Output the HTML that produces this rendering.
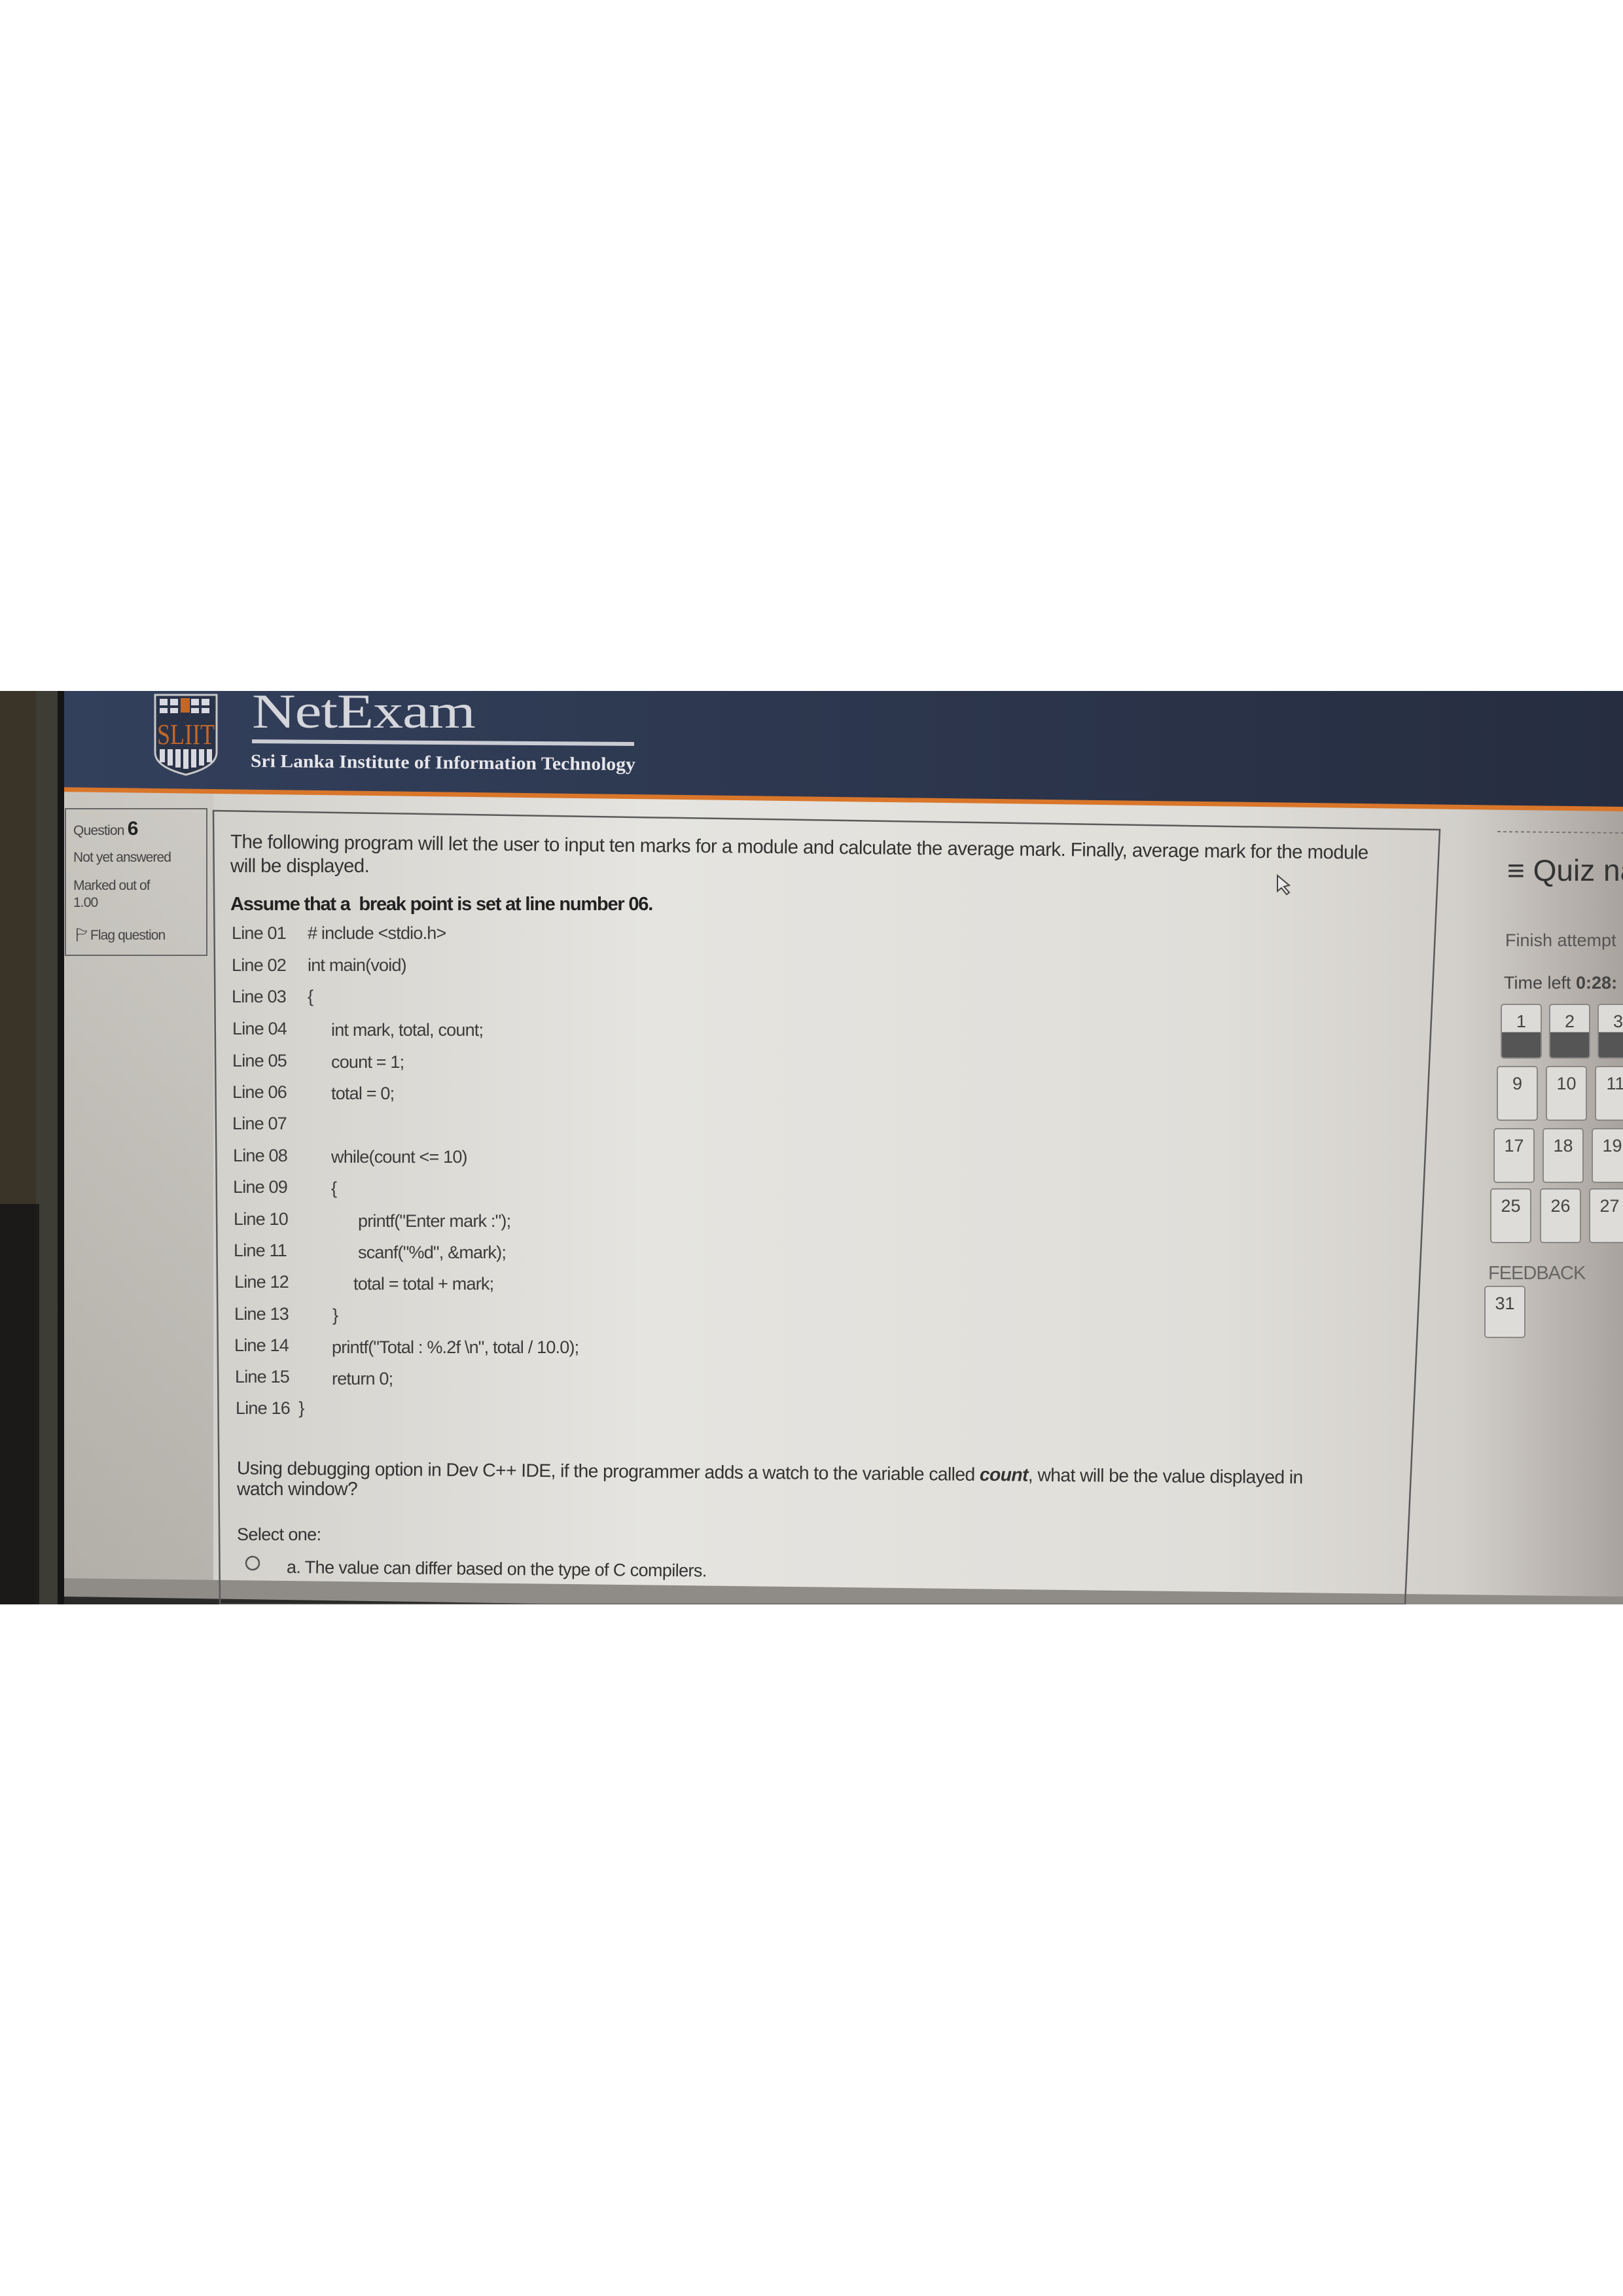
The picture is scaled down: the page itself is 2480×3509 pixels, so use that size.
<!DOCTYPE html>
<html><head><meta charset="utf-8"><style>
*{margin:0;padding:0;box-sizing:border-box}
body{width:2480px;height:3509px;background:#fff;position:relative;overflow:hidden;font-family:"Liberation Sans",sans-serif;color:#3a3a3a}
.a{position:absolute;white-space:nowrap}
.t{font-size:27px;letter-spacing:-0.6px;color:#333}
.ln{font-size:27px;letter-spacing:-0.8px;color:#3c3c3c}
.btn{position:absolute;width:63px;height:84px;border:2px solid #8a8884;border-radius:5px;background:#dddcd8;font-size:27px;text-align:center;padding-top:10px;color:#444}
.btn.f{background:linear-gradient(#dcdbd7 0 52%,#555 52%)}
</style></head><body>
<svg class="a" style="left:0;top:1056px" width="2480" height="1396" viewBox="0 1056 2480 1396">
<defs>
<linearGradient id="hd" x1="0" x2="1"><stop offset="0" stop-color="#33405c"/><stop offset="1" stop-color="#262d40"/></linearGradient>
<linearGradient id="bg" x1="0" x2="1"><stop offset="0" stop-color="#c4c1bb"/><stop offset="0.13" stop-color="#d3d1cc"/><stop offset="0.4" stop-color="#e5e4e0"/><stop offset="0.75" stop-color="#e0ded9"/><stop offset="0.9" stop-color="#d2cfca"/><stop offset="1" stop-color="#a9a39e"/></linearGradient>
<linearGradient id="lb" x1="0" y1="0" x2="0" y2="1"><stop offset="0" stop-color="#c9c6c0"/><stop offset="1" stop-color="#a29e97"/></linearGradient>
</defs>
<rect x="0" y="1056" width="2480" height="1396" fill="url(#bg)"/>
<rect x="90" y="1210" width="236" height="1242" fill="url(#lb)" opacity="0.6"/>
<polygon points="85,1056 2480,1056 2480,1236 85,1205" fill="url(#hd)"/>
<polygon points="85,1203 2480,1233 2480,1240 85,1210" fill="#d9762a"/>
<rect x="0" y="1056" width="55" height="1396" fill="#3a3428"/>
<rect x="55" y="1056" width="35" height="1396" fill="#3d3c35"/>
<rect x="88" y="1056" width="10" height="1396" fill="#151515"/>
<rect x="0" y="1840" width="60" height="612" fill="#141414" opacity="0.8"/>
<polygon points="98,2412 2480,2440 2480,2452 98,2452" fill="#8f8c88"/>
<polygon points="98,2440 900,2452 98,2452" fill="#2a2a28"/>
<rect x="100" y="1236" width="216" height="224" fill="none" stroke="#666" stroke-width="2"/>
<polygon points="326,1239 2200,1268 2147,2452 336,2452" fill="none" stroke="#5a5a5a" stroke-width="2.5"/>
<line x1="2288" y1="1271" x2="2480" y2="1273" stroke="#777" stroke-width="2" stroke-dasharray="5,4"/>
<line x1="385" y1="1133" x2="969" y2="1137" stroke="#c9ccd3" stroke-width="6"/>
<path d="M237,1062 H331 V1150 Q331,1172 284,1184 Q237,1172 237,1150 Z" fill="#2a3248" stroke="#c8c8c8" stroke-width="3"/>
<g fill="#d8d8e0"><rect x="244" y="1068" width="12" height="10"/><rect x="260" y="1068" width="12" height="10"/><rect x="292" y="1068" width="12" height="10"/><rect x="308" y="1068" width="12" height="10"/><rect x="244" y="1082" width="12" height="8"/><rect x="260" y="1082" width="12" height="8"/><rect x="292" y="1082" width="12" height="8"/><rect x="308" y="1082" width="12" height="8"/>
<rect x="244" y="1145" width="8" height="20"/><rect x="256" y="1145" width="8" height="25"/><rect x="268" y="1145" width="8" height="28"/><rect x="280" y="1145" width="8" height="30"/><rect x="292" y="1145" width="8" height="28"/><rect x="304" y="1145" width="8" height="25"/><rect x="316" y="1145" width="8" height="20"/></g>
<rect x="276" y="1067" width="14" height="22" fill="#c0682a"/>
<text x="240" y="1137" font-family="Liberation Serif" font-size="44" fill="#c0682a" textLength="88" lengthAdjust="spacingAndGlyphs">SLIIT</text>
<path d="M1952,1338 l0,24 l6,-5 l8,10 l4,-3 l-8,-9 l8,-2 z" fill="#e8e8e8" stroke="#444" stroke-width="2"/>
<circle cx="386" cy="2389" r="10" fill="none" stroke="#555" stroke-width="2.5"/>
</svg>

<div class="a" style="left:385px;top:1046px;font-family:'Liberation Serif',serif;font-size:74px;color:#d4d6dc;letter-spacing:-1px;transform:scaleX(1.25);transform-origin:left">NetExam</div>
<div class="a" style="left:383px;top:1148px;font-family:'Liberation Serif',serif;font-weight:bold;font-size:28px;color:#e6e6ea;transform:rotate(0.5deg) scaleX(1.06);transform-origin:left">Sri Lanka Institute of Information Technology</div>

<div class="a" style="left:112px;top:1250px;font-size:21px;letter-spacing:-0.8px;color:#444">Question <b style="font-size:30px;color:#222">6</b></div>
<div class="a" style="left:112px;top:1299px;font-size:21px;letter-spacing:-0.9px;color:#444">Not yet answered</div>
<div class="a" style="left:112px;top:1341px;font-size:21px;letter-spacing:-0.9px;color:#444;line-height:26px;white-space:normal;width:180px">Marked out of<br>1.00</div>
<div class="a" style="left:116px;top:1415px;font-size:21px;letter-spacing:-0.9px;color:#444">&#x1F3F1;&#xFE0E; Flag question</div>

<div class="a t" style="left:352px;top:1270px;font-size:29.5px;transform:rotate(0.55deg);transform-origin:left">The following program will let the user to input ten marks for a module and calculate the average mark. Finally, average mark for the module</div>
<div class="a t" style="left:352px;top:1307px;font-size:29.5px">will be displayed.</div>
<div class="a t" style="left:352px;top:1366px;font-size:29px;font-weight:bold;letter-spacing:-1.2px;color:#222">Assume that a &nbsp;break point is set at line number 06.</div>

<div class="a ln" style="left:354px;top:1411px">Line 01</div><div class="a ln" style="left:470px;top:1411px"># include &lt;stdio.h&gt;</div>
<div class="a ln" style="left:354px;top:1460px">Line 02</div><div class="a ln" style="left:470px;top:1460px">int main(void)</div>
<div class="a ln" style="left:354px;top:1508px">Line 03</div><div class="a ln" style="left:470px;top:1508px">{</div>
<div class="a ln" style="left:355px;top:1557px">Line 04</div><div class="a ln" style="left:506px;top:1559px">int mark, total, count;</div>
<div class="a ln" style="left:355px;top:1606px">Line 05</div><div class="a ln" style="left:506px;top:1608px">count = 1;</div>
<div class="a ln" style="left:355px;top:1654px">Line 06</div><div class="a ln" style="left:506px;top:1656px">total = 0;</div>
<div class="a ln" style="left:355px;top:1702px">Line 07</div>
<div class="a ln" style="left:356px;top:1751px">Line 08</div><div class="a ln" style="left:506px;top:1753px">while(count &lt;= 10)</div>
<div class="a ln" style="left:356px;top:1799px">Line 09</div><div class="a ln" style="left:506px;top:1801px">{</div>
<div class="a ln" style="left:357px;top:1848px">Line 10</div><div class="a ln" style="left:547px;top:1851px">printf("Enter mark :");</div>
<div class="a ln" style="left:357px;top:1896px">Line 11</div><div class="a ln" style="left:547px;top:1899px">scanf("%d", &amp;mark);</div>
<div class="a ln" style="left:358px;top:1944px">Line 12</div><div class="a ln" style="left:540px;top:1947px">total = total + mark;</div>
<div class="a ln" style="left:358px;top:1993px">Line 13</div><div class="a ln" style="left:508px;top:1995px">}</div>
<div class="a ln" style="left:358px;top:2041px">Line 14</div><div class="a ln" style="left:507px;top:2044px">printf("Total : %.2f \n", total / 10.0);</div>
<div class="a ln" style="left:359px;top:2089px">Line 15</div><div class="a ln" style="left:507px;top:2092px">return 0;</div>
<div class="a ln" style="left:360px;top:2137px">Line 16 &nbsp;}</div>

<div class="a t" style="left:362px;top:2227px;font-size:28.3px;transform:rotate(0.5deg);transform-origin:left">Using debugging option in Dev C++ IDE, if the programmer adds a watch to the variable called <b><i>count</i></b>, what will be the value displayed in</div>
<div class="a t" style="left:362px;top:2259px;font-size:28.3px">watch window?</div>
<div class="a t" style="left:362px;top:2330px">Select one:</div>
<div class="a t" style="left:438px;top:2380px;transform:rotate(0.5deg);transform-origin:left">a. The value can differ based on the type of C compilers.</div>

<div class="a" style="left:2303px;top:1303px;font-size:46px;color:#333">&#8801; Quiz na</div>
<div class="a" style="left:2300px;top:1422px;font-size:27px;color:#555">Finish attempt</div>
<div class="a" style="left:2298px;top:1487px;font-size:27px;color:#444">Time left <b>0:28:</b></div>

<div class="btn f" style="left:2293px;top:1534px">1</div><div class="btn f" style="left:2367px;top:1534px">2</div><div class="btn f" style="left:2441px;top:1534px">3</div>
<div class="btn" style="left:2287px;top:1629px">9</div><div class="btn" style="left:2362px;top:1629px">10</div><div class="btn" style="left:2437px;top:1629px">11</div>
<div class="btn" style="left:2282px;top:1724px">17</div><div class="btn" style="left:2357px;top:1724px">18</div><div class="btn" style="left:2432px;top:1724px">19</div>
<div class="btn" style="left:2277px;top:1816px">25</div><div class="btn" style="left:2353px;top:1816px">26</div><div class="btn" style="left:2428px;top:1816px">27</div>
<div class="a" style="left:2274px;top:1930px;font-size:29px;color:#666;letter-spacing:-1px">FEEDBACK</div>
<div class="btn" style="left:2268px;top:1965px;height:80px">31</div>
</body></html>
